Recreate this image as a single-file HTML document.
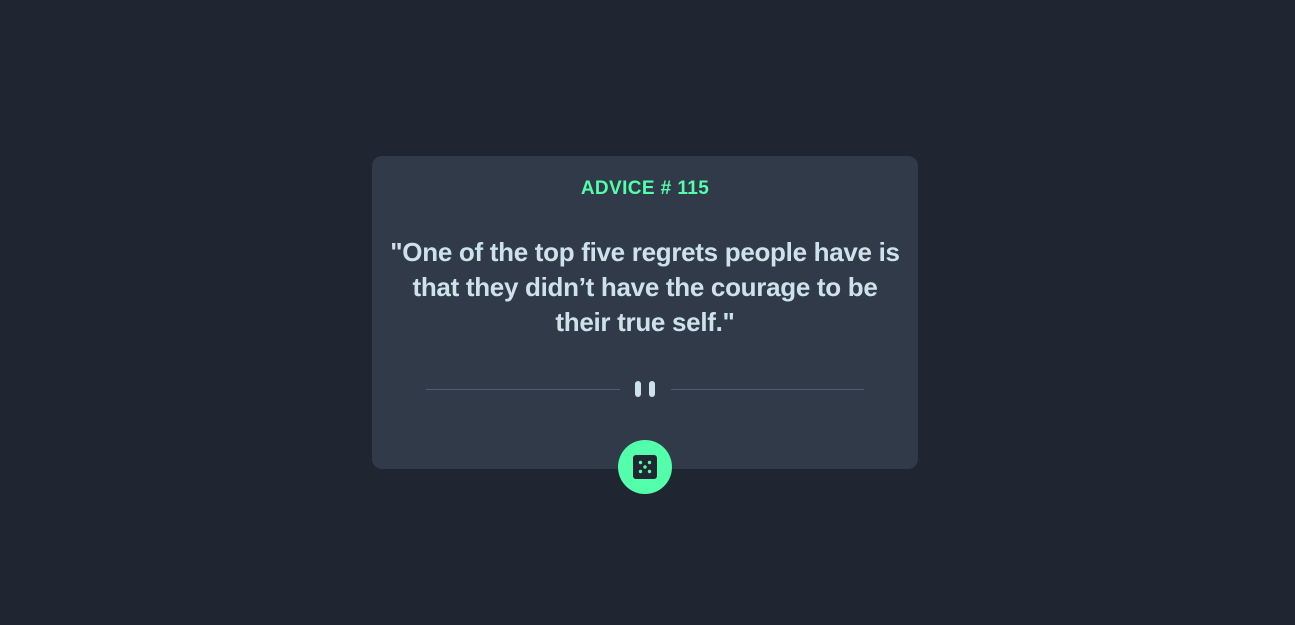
<!DOCTYPE html>
<html><head><meta charset="utf-8"><style>
html,body{margin:0;padding:0;width:1295px;height:625px;background:#1F2632;overflow:hidden}
body{font-family:"Liberation Sans",sans-serif;position:relative}
.card{position:absolute;left:372px;top:156px;width:546px;height:313px;background:#313A48;border-radius:10px}
.h{position:absolute;top:177px;left:372px;width:546px;text-align:center;color:#53FFAA;font-weight:bold;font-size:19px;letter-spacing:0.4px;line-height:24px}
.q{position:absolute;top:235px;left:362px;width:566px;text-align:center;color:#CEE3E9;font-weight:bold;font-size:26px;line-height:35px;letter-spacing:-0.3px}
.l{position:absolute;top:389px;height:1px;background:#4F5D74}
.bar{position:absolute;top:381px;width:6px;height:16px;border-radius:3px;background:#CEE3E9}
.btn{position:absolute;left:618px;top:440px;width:54px;height:54px;border-radius:50%;background:#53FFAA}
</style></head><body>
<div class="card"></div>
<div class="h">ADVICE # 115</div>
<div class="q">"One of the top five regrets people have is<br>that they didn’t have the courage to be<br>their true self."</div>
<div class="l" style="left:426px;width:194px"></div>
<div class="l" style="left:671px;width:193px"></div>
<div class="bar" style="left:635px"></div>
<div class="bar" style="left:649px"></div>
<div class="btn"><svg width="24" height="24" viewBox="0 0 24 24" style="position:absolute;left:15px;top:15px">
<rect x="0" y="0" width="24" height="24" rx="3" fill="#202733"/>
<circle cx="7.5" cy="7.5" r="1.7" fill="#53FFAA"/><circle cx="16.5" cy="7.5" r="1.7" fill="#53FFAA"/>
<circle cx="12" cy="12" r="1.7" fill="#53FFAA"/>
<circle cx="7.5" cy="16.5" r="1.7" fill="#53FFAA"/><circle cx="16.5" cy="16.5" r="1.7" fill="#53FFAA"/>
</svg></div>
</body></html>
